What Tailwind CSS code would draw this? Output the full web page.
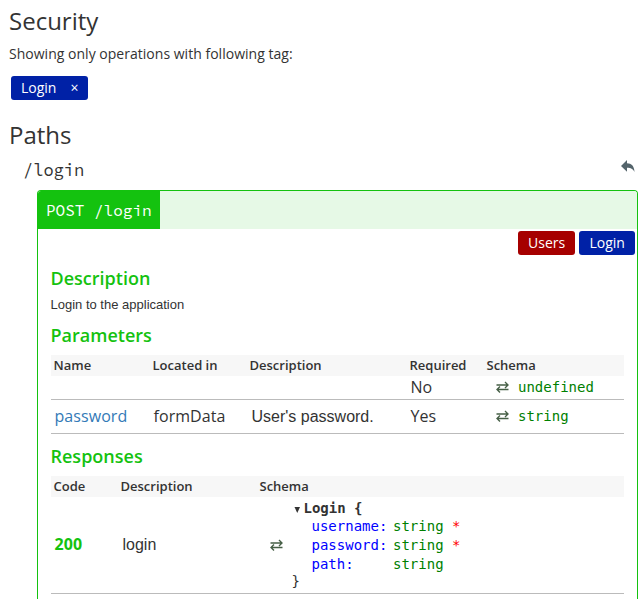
<!DOCTYPE html>
<html lang="en">
<head>
<meta charset="utf-8">
<title>Security</title>
<script src="https://cdn.jsdelivr.net/npm/@tailwindcss/browser@4"></script>
</head>
<body class="h-[599px] overflow-hidden bg-white font-['Open_Sans',sans-serif] text-[#333]">
<h2 class="h-11 pl-[9px] text-2xl leading-[42px]"><span>Security</span></h2>
<p class="h-5 pl-[9px] text-sm leading-5 tracking-[0.02px]"><span>Showing only operations with following tag:</span></p>
<div class="mt-3 ml-[11px] flex h-6 w-[77px] items-center rounded-[3px] bg-[#0021a6] pl-[10px] text-sm text-white"><span>Login</span><span class="ml-[14px]">×</span></div>
<h2 class="mt-[13px] h-11 pl-[9px] text-2xl leading-[44px]"><span>Paths</span></h2>
<div class="flex h-[33px] justify-between pr-[9px] pl-[23px]">
  <span class="font-['Source_Code_Pro','DejaVu_Sans_Mono',monospace] text-[17px] leading-[26px]">/login</span>
  <svg class="mt-[3px] h-[13px] w-[14px]" viewBox="0 0 14 13" fill="#54646b"><path d="M6 0v3.2C10.5 3.4 13 5.7 13.5 12 11.8 8.8 10 7.9 6 7.8V11.8L0 6Z"/></svg>
</div>
<section class="ml-[37px] h-[409px] w-[601px] rounded-t-[4px] border border-b-0 border-[#14c20f]">
  <div class="flex h-[38px] rounded-t-[3px] bg-[#e6f9e6]"><div class="w-[122px] rounded-tl-[3px] bg-[#14c20f] pl-2 font-['Source_Code_Pro','DejaVu_Sans_Mono',monospace] text-[16px] leading-[38px] text-white"><span>POST /login</span></div></div>
  <div class="mt-[2px] flex h-6 justify-end gap-1 pr-[2px] text-sm leading-6 text-white"><span class="w-[57px] rounded-[3px] bg-[#a60000] pl-[10px]">Users</span><span class="w-14 rounded-[3px] bg-[#0021a6] pl-[10.5px]">Login</span></div>
  <div class="pr-[13px] pl-[13px]">
    <h3 class="mt-[11px] -ml-[0.5px] h-[25px] text-lg leading-[25px] font-semibold text-[#14c20f]"><span>Description</span></h3>
    <p class="mt-1 -ml-[0.5px] h-5 font-['Liberation_Sans',sans-serif] text-[13px] leading-5"><span>Login to the application</span></p>
    <h3 class="mt-[8px] -ml-[0.5px] h-[25px] text-lg leading-[25px] font-semibold text-[#14c20f]"><span>Parameters</span></h3>
    <div class="mt-[7px] grid h-[21px] grid-cols-[99px_97px_160px_77px_1fr] bg-[#f7f7f7] pl-[2.5px] text-[13px] leading-[21px] font-semibold"><span>Name</span><span>Located in</span><span>Description</span><span>Required</span><span>Schema</span></div>
    <div class="grid h-6 grid-cols-[99px_98px_159px_85.5px_22px_1fr] border-b border-[#bbb] pl-[3.5px] text-base leading-[22px]"><span></span><span></span><span></span><span>No</span>
      <svg class="mt-[5px] h-[12px] w-[13px]" viewBox="0 0 13 12" fill="none" stroke="#465f46" stroke-width="1.35"><path d="M0.5 4h11.5M9 1l3 3-3 3M12.5 8.5H1M4 5.5L1 8.5l3 3"/></svg>
      <span class="font-['DejaVu_Sans_Mono',monospace] text-sm leading-[22px] text-[#008000]">undefined</span></div>
    <div class="grid h-[34px] grid-cols-[99px_98px_159px_85.5px_22px_1fr] border-b border-[#bbb] pl-[3.5px] text-base leading-8"><span class="tracking-[0.06px] text-[#337ab7]">password</span><span class="tracking-[0.06px]">formData</span><span class="font-['Liberation_Sans',sans-serif] leading-[34px]">User's password.</span><span>Yes</span>
      <svg class="mt-[10px] h-[12px] w-[13px]" viewBox="0 0 13 12" fill="none" stroke="#465f46" stroke-width="1.35"><path d="M0.5 4h11.5M9 1l3 3-3 3M12.5 8.5H1M4 5.5L1 8.5l3 3"/></svg>
      <span class="font-['DejaVu_Sans_Mono',monospace] text-sm leading-8 text-[#008000]">string</span></div>
    <h3 class="mt-[10px] -ml-[0.5px] h-[25px] text-lg leading-[25px] font-semibold text-[#14c20f]"><span>Responses</span></h3>
    <div class="mt-[7px] grid h-[21px] grid-cols-[67px_139px_1fr] bg-[#f7f7f7] pl-[2.5px] text-[13px] leading-[21px] font-semibold"><span>Code</span><span>Description</span><span>Schema</span></div>
    <div class="grid h-[97px] grid-cols-[68px_147px_22px_1fr] items-center border-b border-[#bbb] pl-[3.5px] text-base">
      <span class="pb-[2px] font-bold tracking-[0.1px] text-[#14c20f]">200</span><span class="font-['Liberation_Sans',sans-serif]">login</span>
      <svg class="h-[12px] w-[13px]" viewBox="0 0 13 12" fill="none" stroke="#465f46" stroke-width="1.35"><path d="M0.5 4h11.5M9 1l3 3-3 3M12.5 8.5H1M4 5.5L1 8.5l3 3"/></svg>
      <div class="h-[96px] pt-[2px] font-['DejaVu_Sans_Mono',monospace] text-sm">
        <div class="flex h-[18px] pl-[2px] leading-[18px] font-bold"><svg class="mt-[8px] mr-[3px] h-[6px] w-[7px]" viewBox="0 0 7 6" fill="#333"><path d="M0.5 0h5.5L3.25 6Z"/></svg><span>Login {</span></div>
        <div class="grid grid-cols-[81.5px_59px_1fr] pl-[20px] leading-[19px]"><span class="text-[#00f]">username:</span><span class="text-[#008000]">string</span><span class="text-[#f00]">*</span><span class="text-[#00f]">password:</span><span class="text-[#008000]">string</span><span class="text-[#f00]">*</span><span class="text-[#00f]">path:</span><span class="text-[#008000]">string</span></div>
        <div class="h-4 leading-[14px]"><span>}</span></div>
      </div>
    </div>
  </div>
</section>
</body>
</html>
